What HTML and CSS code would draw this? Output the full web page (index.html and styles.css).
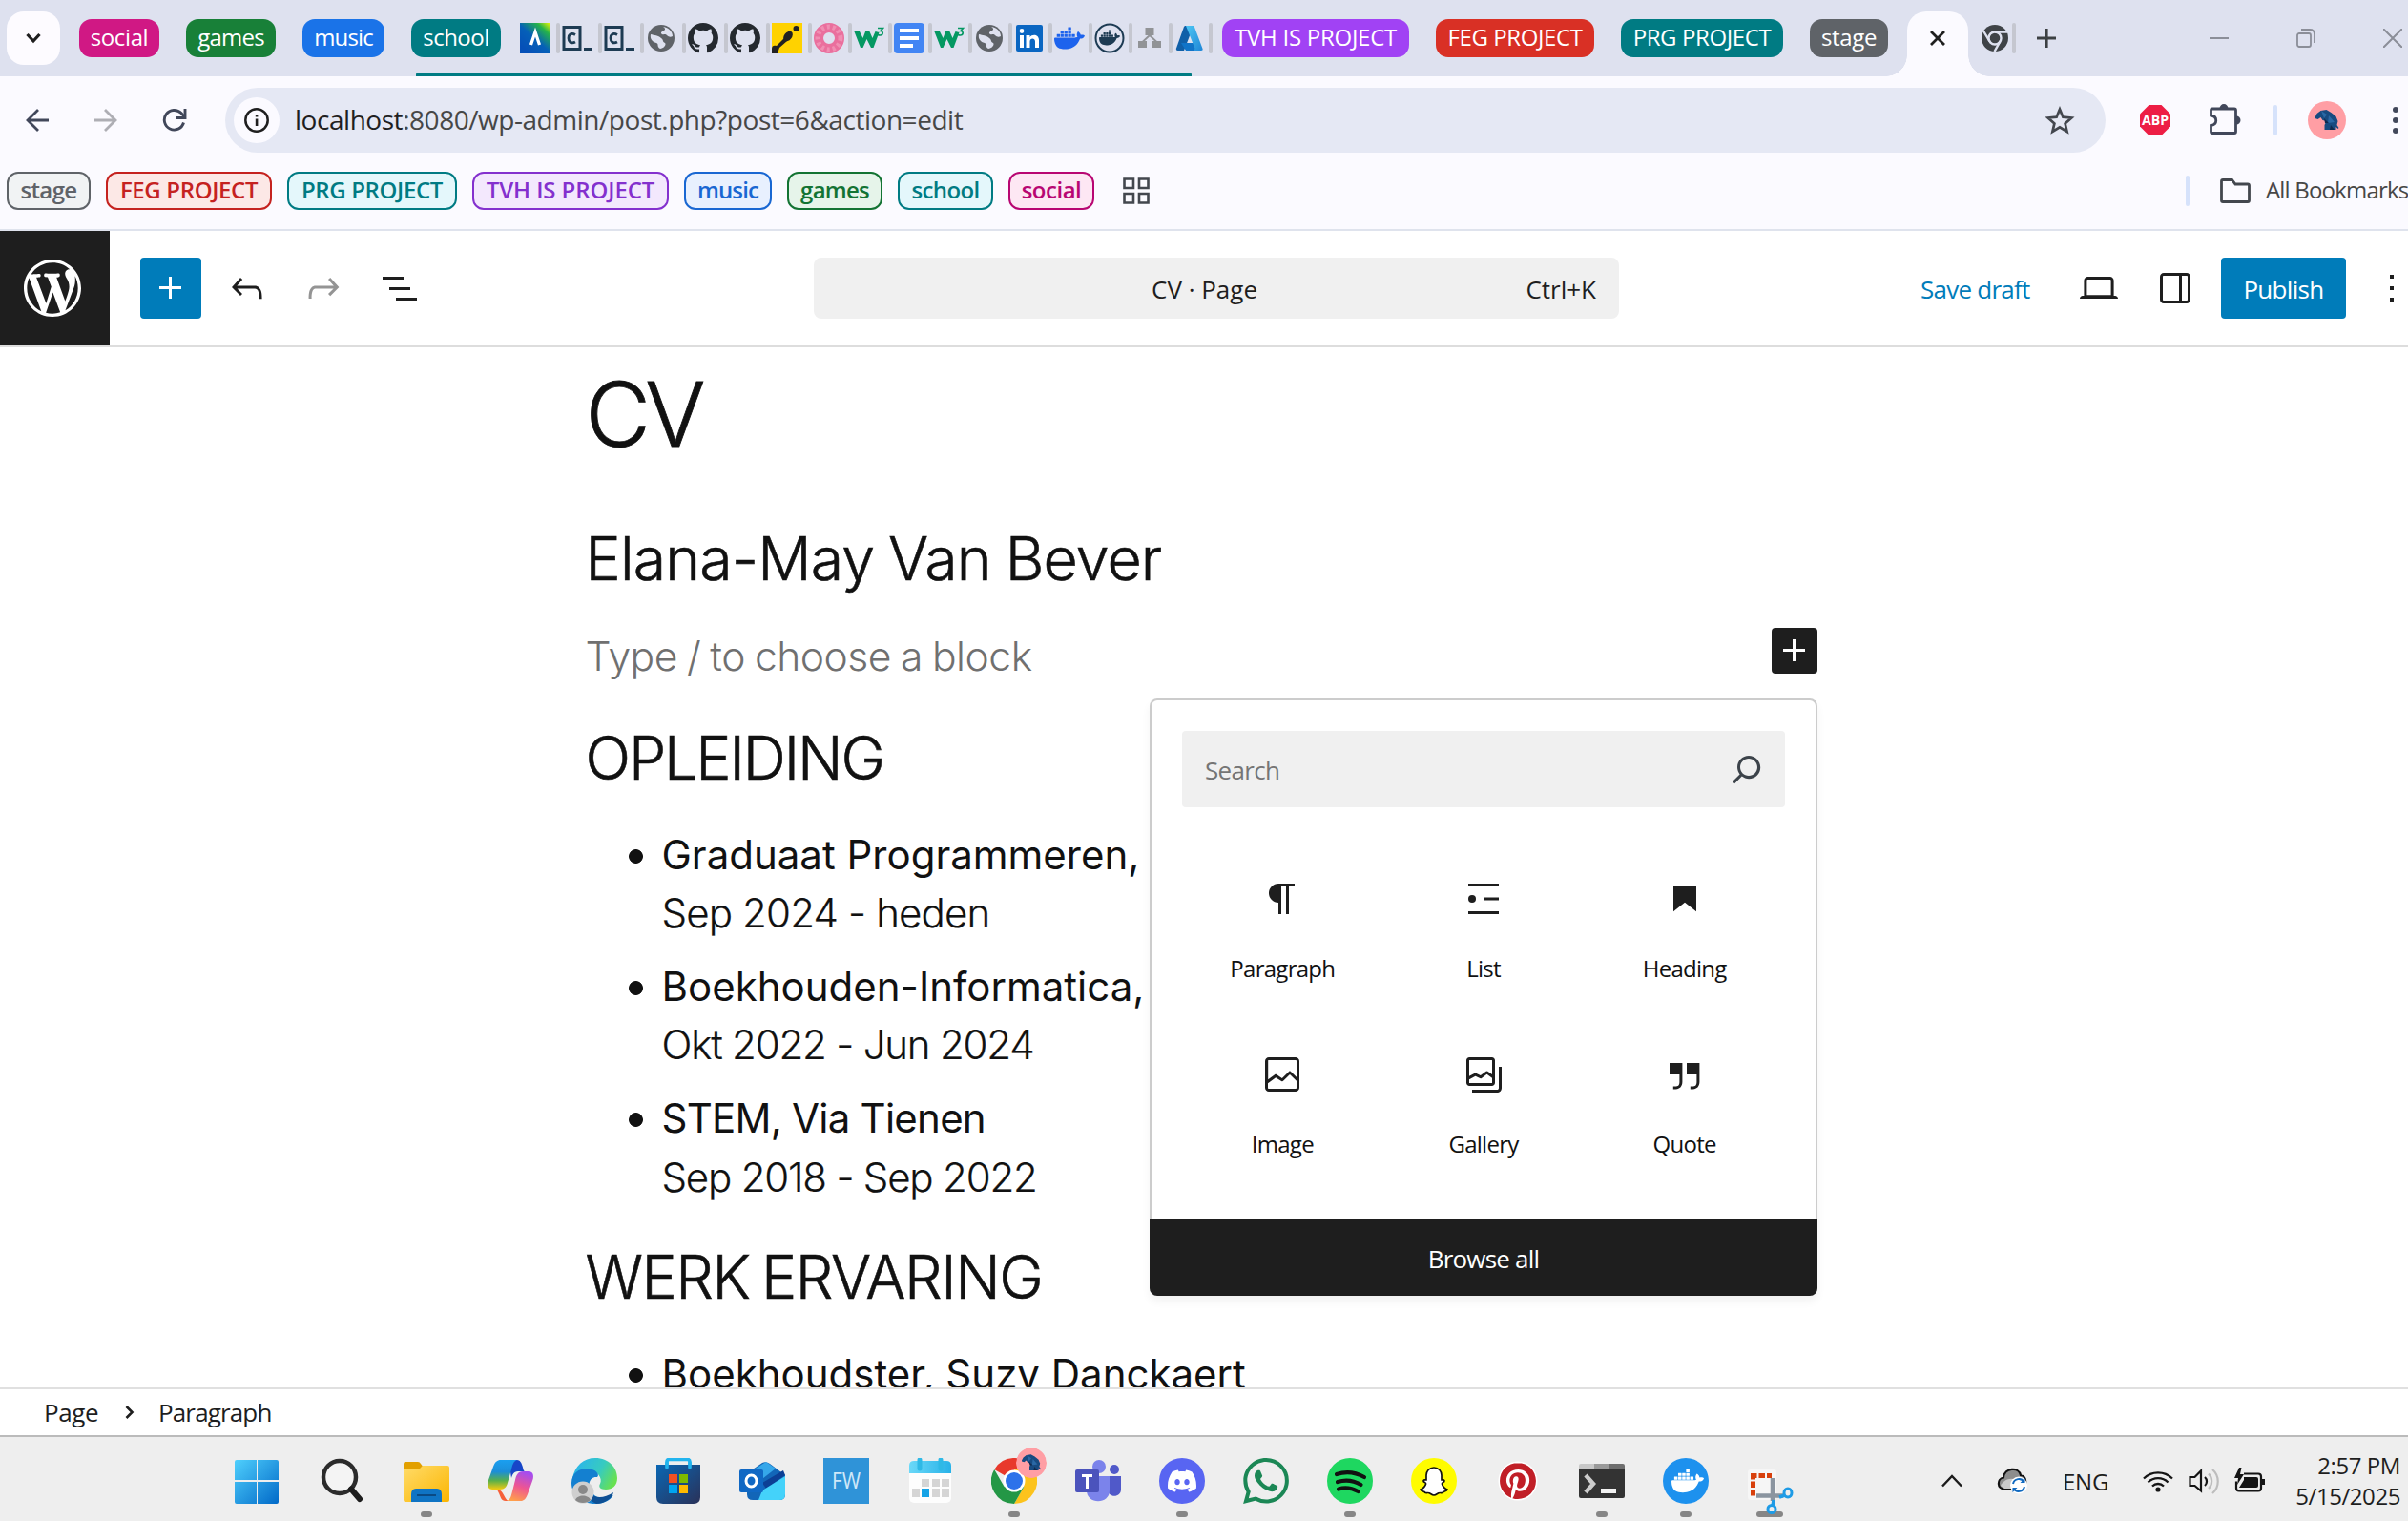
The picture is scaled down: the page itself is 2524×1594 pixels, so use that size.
FILE: index.html
```html
<!DOCTYPE html>
<html lang="nl">
<head>
<meta charset="utf-8">
<title>CV - Page editor</title>
<link rel="stylesheet" href="styles.css">
</head>
<body>
<svg class="defs" width="0" height="0" aria-hidden="true">
  <defs>
    <linearGradient id="g-win" x1="0" y1="0" x2="1" y2="1"><stop offset="0" stop-color="#4fd0fd"/><stop offset="1" stop-color="#0169c8"/></linearGradient>
    <linearGradient id="g-fold" x1="0" y1="0" x2="1" y2="1"><stop offset="0" stop-color="#ffdc6a"/><stop offset="1" stop-color="#fbb500"/></linearGradient>
    <linearGradient id="g-copA" x1="0" y1="0" x2="0" y2="1"><stop offset="0" stop-color="#1a9ff0"/><stop offset=".4" stop-color="#1c8ed8"/><stop offset=".7" stop-color="#58b04a"/><stop offset="1" stop-color="#f5cb10"/></linearGradient>
    <linearGradient id="g-copB" x1=".6" y1="0" x2=".3" y2="1"><stop offset="0" stop-color="#a44df0"/><stop offset=".5" stop-color="#ee5592"/><stop offset="1" stop-color="#ffa04a"/></linearGradient>
    <linearGradient id="g-edge" x1="0" y1=".2" x2="1" y2=".6"><stop offset="0" stop-color="#2ab3ef"/><stop offset=".6" stop-color="#37cbc0"/><stop offset="1" stop-color="#68e150"/></linearGradient>
    <linearGradient id="g-store" x1="0" y1="0" x2="1" y2="1"><stop offset="0" stop-color="#0a67b4"/><stop offset="1" stop-color="#2a3158"/></linearGradient>
    <linearGradient id="g-cal" x1="0" y1="0" x2="1" y2="0"><stop offset="0" stop-color="#6ad8f8"/><stop offset="1" stop-color="#28b2e8"/></linearGradient>
    <linearGradient id="g-ang" x1="1" y1="0" x2=".2" y2=".9"><stop offset="0" stop-color="#f2fa00"/><stop offset=".25" stop-color="#25b34a"/><stop offset=".6" stop-color="#0560b8"/><stop offset="1" stop-color="#0550b8"/></linearGradient>
    <linearGradient id="g-az" x1="0" y1="0" x2="1" y2="1"><stop offset="0" stop-color="#4cc6f4"/><stop offset="1" stop-color="#1f86d6"/></linearGradient>
    <symbol id="i-code" viewBox="0 0 32 32"><path d="M2 4.500h17v23H2z" fill="none" stroke="#1d3b53" stroke-width="3"/><path d="M23 26h9v3h-9z" fill="#1d3b53"/><path d="M14 12.500c-4.500-2.500-7 0-7 3.500s2.500 6.500 7 4" fill="none" stroke="#1d3b53" stroke-width="2.800"/></symbol>
    <symbol id="i-globe" viewBox="0 0 32 32"><circle cx="16" cy="16" r="14" fill="#5f6368"/><path d="M5 12c4 1 8 1 11 4 3 2 1 4 4 5 2 2-2 6-5 6-4-2-1-5-4-6-4-1-7-4-6-9zM18 4c2 1 3 3 1 4-3 1-4 3-2 4s3-1 5 1 4 2 6 1c0-5-4-9-10-10z" fill="#dee1ef"/></symbol>
    <symbol id="i-github" viewBox="0 0 16 16"><path fill="#24292f" d="M8 0C3.580 0 0 3.580 0 8c0 3.540 2.290 6.530 5.470 7.590.4.070.55-.17.55-.38 0-.19-.01-.82-.01-1.490-2.010.37-2.530-.49-2.690-.94-.09-.23-.48-.94-.82-1.130-.28-.15-.68-.52-.01-.53.63-.01 1.080.58 1.230.82.72 1.210 1.870.87 2.330.66.070-.52.28-.87.51-1.070-1.780-.2-3.640-.89-3.640-3.950 0-.87.31-1.590.82-2.150-.08-.2-.36-1.020.08-2.120 0 0 .67-.21 2.200.82.64-.18 1.320-.27 2-.27.68 0 1.360.09 2 .27 1.530-1.040 2.200-.82 2.200-.82.44 1.100.16 1.920.08 2.120.51.56.82 1.270.82 2.150 0 3.070-1.870 3.750-3.650 3.950.29.25.54.73.54 1.480 0 1.070-.01 1.930-.01 2.200 0 .21.15.46.55.38A8.013 8.013 0 0016 8c0-4.420-3.580-8-8-8z"/></symbol>
    <symbol id="i-w3" viewBox="0 0 32 32"><path d="M0 8h5.500l4 8 3-8h3.500l3.500 8 3-7 4 1-6 16h-2.500l-4.500-9-4 9H7z" fill="#059862"/><path d="M25 5.500h5.500l-2.500 3c3 0 3 4.500-.5 4.500-1.500 0-2.500-.5-2.500-1.500" fill="none" stroke="#059862" stroke-width="1.700"/></symbol>
    <symbol id="i-whale" viewBox="0 0 24 24"><path d="M13.983 11.078h2.119a.186.186 0 00.186-.185V9.006a.186.186 0 00-.186-.186h-2.119a.185.185 0 00-.185.185v1.888c0 .102.083.185.185.185m-2.954-5.430h2.118a.186.186 0 00.186-.186V3.574a.186.186 0 00-.186-.185h-2.118a.185.185 0 00-.185.185v1.888c0 .102.082.185.185.186m0 2.716h2.118a.187.187 0 00.186-.186V6.290a.186.186 0 00-.186-.185h-2.118a.185.185 0 00-.185.185v1.887c0 .102.082.185.185.186m-2.930 0h2.120a.186.186 0 00.184-.186V6.290a.185.185 0 00-.185-.185H8.100a.185.185 0 00-.185.185v1.887c0 .102.083.185.185.186m-2.964 0h2.119a.186.186 0 00.185-.186V6.290a.185.185 0 00-.185-.185H5.136a.186.186 0 00-.186.185v1.887c0 .102.084.185.186.186m5.893 2.715h2.118a.186.186 0 00.186-.185V9.006a.186.186 0 00-.186-.186h-2.118a.185.185 0 00-.185.185v1.888c0 .102.082.185.185.185m-2.930 0h2.120a.185.185 0 00.184-.185V9.006a.185.185 0 00-.184-.186h-2.120a.185.185 0 00-.184.185v1.888c0 .102.083.185.185.185m-2.964 0h2.119a.185.185 0 00.185-.185V9.006a.185.185 0 00-.184-.186h-2.120a.186.186 0 00-.186.186v1.887c0 .102.084.185.186.185m-2.920 0h2.120a.185.185 0 00.184-.185V9.006a.185.185 0 00-.184-.186h-2.120a.185.185 0 00-.184.185v1.888c0 .102.082.185.185.185M23.763 9.890c-.065-.051-.672-.51-1.954-.51-.338.001-.676.03-1.010.087-.248-1.700-1.653-2.530-1.716-2.566l-.344-.199-.226.327c-.284.438-.49.922-.612 1.430-.23.97-.09 1.882.403 2.661-.595.332-1.550.413-1.744.42H.751a.751.751 0 00-.75.748 11.376 11.376 0 00.692 4.062c.545 1.428 1.355 2.480 2.410 3.124 1.180.723 3.100 1.137 5.275 1.137.983.003 1.963-.086 2.930-.266a12.248 12.248 0 003.823-1.389c.98-.567 1.860-1.288 2.610-2.136 1.252-1.418 1.998-2.997 2.553-4.400h.221c1.372 0 2.215-.549 2.680-1.009.309-.293.55-.65.707-1.046l.098-.288Z"/></symbol>
    <symbol id="i-elephant" viewBox="0 0 40 40"><circle cx="20" cy="20" r="20" fill="#ff9ea4"/><path d="M7.500 17l2-4 4-3 6-1 5 3 5 4 2 5-1 4 2 3-1 1-2-2v3h-12v-5l2-4-4-1-2-3-3 2-3-1z" fill="#174a80"/><path d="M14 10l6 4-3 4zm8 5l6 7-7 1z" fill="#2a68a5"/><path d="M17 18l5 5-4 0zm7 7l4 5h-5z" fill="#10294d"/></symbol>
  </defs>
</svg>

<div class="screen">
  <header class="tabstrip">
    <button class="tab-search"><svg width="16" height="12" viewBox="0 0 16 12"><path d="M1.500 2l6.500 7 6.500-7" fill="none" stroke="#1f1f1f" stroke-width="3.200"/></svg></button>
    <span class="chip chip-social">social</span>
    <span class="chip chip-games">games</span>
    <span class="chip chip-music">music</span>
    <div class="school-group">
      <span class="chip chip-school">school</span>
      <div class="favs wide">
        <i><svg viewBox="0 0 32 32"><path d="M0 0h32v32H0z" fill="url(#g-ang)"/><path d="M11.500 23L16 9.500 20.500 23" fill="none" stroke="#fff" stroke-width="3.200"/></svg></i>
        <i><svg><use href="#i-code"/></svg></i>
        <i><svg><use href="#i-code"/></svg></i>
        <i><svg><use href="#i-globe"/></svg></i>
        <i><svg><use href="#i-github"/></svg></i>
        <i><svg><use href="#i-github"/></svg></i>
        <i><svg viewBox="0 0 32 32"><path d="M0 0h32v32H0z" fill="#ffd200"/><circle cx="25.500" cy="6" r="3" fill="#222"/><ellipse cx="17" cy="14" rx="4" ry="6" transform="rotate(38 17 14)" fill="#222"/><path d="M0 32v-5c0-3 2-4 5-3l8-8 3 3-8 7-2 6z" fill="#222"/></svg></i>
      </div>
      <div class="favs">
        <i><svg viewBox="0 0 32 32"><circle cx="16" cy="16" r="11" fill="none" stroke="#ea6f9d" stroke-width="10"/><circle cx="16" cy="16" r="12" fill="none" stroke="#f08fb3" stroke-width="5" stroke-dasharray="3 3"/></svg></i>
        <i><svg><use href="#i-w3"/></svg></i>
        <i><svg viewBox="0 0 32 32"><rect width="32" height="32" rx="4" fill="#4285f4"/><path d="M6 6h20v4H6zm0 8h20v4H6zm0 8h14v4H6z" fill="#fff"/></svg></i>
        <i><svg><use href="#i-w3"/></svg></i>
        <i><svg><use href="#i-globe"/></svg></i>
        <i><svg viewBox="0 0 32 32"><rect x="2" y="2" width="28" height="28" rx="2" fill="#0a66c2"/><path d="M6 13h4v13H6zM12.500 13h4v2c2-3.500 9.500-3.500 9.500 3V26h-4v-6.500c0-4-5.500-4-5.500 0V26h-4z" fill="#fff"/><circle cx="8" cy="8.500" r="2.400" fill="#fff"/></svg></i>
        <i><svg viewBox="0 0 24 24" fill="#1d63ed"><use href="#i-whale"/></svg></i>
        <i><svg viewBox="0 0 32 32" fill="#1d3b53"><circle cx="16" cy="16" r="14.500" fill="none" stroke="#1d3b53" stroke-width="2"/><svg x="5" y="4.500" width="22" height="22"><use href="#i-whale"/></svg></svg></i>
        <i><svg viewBox="0 0 32 32" fill="#919396"><path d="M11.500 5h9v8h-9zM4 19h9v7H4zm15 0h9v7h-9z"/><path d="M16 12v2M16 13l-7.500 7M16 13l7.500 7" stroke="#919396" stroke-width="1.800"/></svg></i>
        <i><svg viewBox="0 0 32 32"><path d="M11 3h9L10 29H3.500C2 29 1.500 28 2 26.500L10 4z" fill="#1160a8"/><path d="M7 21h13l4 8H12z" fill="#1174c8"/><path d="M12 3h8.500l9 24c.4 1 0 2-1.500 2h-8l1.500-2z" fill="url(#g-az)"/></svg></i>
      </div>
    </div>
    <span class="chip chip-tvh">TVH IS PROJECT</span>
    <span class="chip chip-feg">FEG PROJECT</span>
    <span class="chip chip-prg">PRG PROJECT</span>
    <span class="chip chip-stage">stage</span>
    <div class="tab-active"><svg width="16" height="16" viewBox="0 0 16 16"><path d="M1 1l14 14M15 1L1 15" stroke="#1f1f1f" stroke-width="2.800"/></svg></div>
    <div class="tab-chrome"><svg width="28" height="28" viewBox="0 0 28 28"><circle cx="14" cy="14" r="14" fill="#3f4347"/><circle cx="14" cy="14" r="6.500" fill="#3f4347" stroke="#dee1ef" stroke-width="2.400"/><path d="M14 7.500h13M8.400 17.200L2 6.500M19.600 17.200L13.500 28" stroke="#dee1ef" stroke-width="2.400"/></svg></div>
    <svg class="tab-new" width="20" height="20" viewBox="0 0 20 20"><path d="M10 0v20M0 10h20" stroke="#3c4043" stroke-width="3.200"/></svg>
    <div class="window-buttons">
      <svg width="20" height="20" viewBox="0 0 20 20"><path d="M0 10h20" stroke="#8b8e98" stroke-width="2"/></svg>
      <svg width="20" height="20" viewBox="0 0 20 20"><rect x="1" y="5" width="14" height="14" rx="2" fill="none" stroke="#8b8e98" stroke-width="1.800"/><path d="M5 1h9c3 0 5 2 5 5v9" fill="none" stroke="#8b8e98" stroke-width="1.800"/></svg>
      <svg width="20" height="20" viewBox="0 0 20 20"><path d="M0 0l20 20M20 0L0 20" stroke="#8b8e98" stroke-width="2"/></svg>
    </div>
  </header>

  <nav class="toolbar">
    <svg class="t-back" width="24" height="24" viewBox="0 0 24 24"><path d="M24 12H2M13 1L2 12l11 11" fill="none" stroke="#41475a" stroke-width="2.800"/></svg>
    <svg class="t-fwd" width="24" height="24" viewBox="0 0 24 24"><path d="M0 12h22M11 1l11 11-11 11" fill="none" stroke="#aeaeb4" stroke-width="2.800"/></svg>
    <svg class="t-reload" width="26" height="26" viewBox="0 0 26 26"><path d="M22.500 15.500A10.300 10.300 0 1 1 20 5.600L23 9" fill="none" stroke="#41475a" stroke-width="2.900"/><path d="M24 1v9.500h-9.500" fill="none" stroke="#41475a" stroke-width="2.900"/></svg>
    <div class="omnibox">
      <span class="site-info"><svg width="28" height="28" viewBox="0 0 28 28"><circle cx="14" cy="14" r="11.700" fill="none" stroke="#1f1f1f" stroke-width="2.500"/><path d="M12.800 12.500h2.600V20h-2.600zM12.800 8h2.600v2.600h-2.600z" fill="#1f1f1f"/></svg></span>
      <span class="url"><b>localhost</b>:8080/wp-admin/post.php?post=6&amp;action=edit</span>
      <svg class="star" width="32" height="30" viewBox="0 0 32 30"><path d="M16 3.500l3.400 8.200 8.900.8-6.700 5.900 2 8.600-7.600-4.600L8.400 27l2-8.600-6.700-5.900 8.900-.8z" fill="none" stroke="#43474e" stroke-width="2.700"/></svg>
    </div>
    <svg class="t-abp" width="32" height="32" viewBox="0 0 32 32"><path d="M9.500 0h13L32 9.500v13L22.500 32h-13L0 22.500v-13z" fill="#ed1e45"/><text x="16" y="21" text-anchor="middle" textLength="28" lengthAdjust="spacingAndGlyphs" class="abp-label">ABP</text></svg>
    <svg class="t-ext" width="34" height="34" viewBox="0 0 34 34"><path d="M3 6h23q1.500 0 1.500 1.500V30q0 1.500-1.500 1.500H3q-1.500 0-1.500-1.500v-6.500c7-1 7-9.500 0-10.500V7.500Q1.500 6 3 6z" fill="none" stroke="#41475a" stroke-width="2.800"/><path d="M10.500 6a4.500 5 0 0 1 9 0zM28 13.500a4.500 4.500 0 0 1 0 9z" fill="#41475a"/></svg>
    <span class="divider"></span>
    <svg class="t-avatar" width="40" height="40"><use href="#i-elephant"/></svg>
    <svg class="t-more" width="6" height="28" viewBox="0 0 6 28" fill="#41475a"><circle cx="3" cy="3" r="3"/><circle cx="3" cy="14" r="3"/><circle cx="3" cy="25" r="3"/></svg>
  </nav>

  <nav class="bookmarks">
    <span class="mark m-stage">stage</span>
    <span class="mark m-feg">FEG PROJECT</span>
    <span class="mark m-prg">PRG PROJECT</span>
    <span class="mark m-tvh">TVH IS PROJECT</span>
    <span class="mark m-music">music</span>
    <span class="mark m-games">games</span>
    <span class="mark m-school">school</span>
    <span class="mark m-social">social</span>
    <svg class="apps" width="28" height="28" viewBox="0 0 28 28" fill="none" stroke="#43474e" stroke-width="2.600"><path d="M1.500 1.500H11V11H1.500zM17 1.500h9.500V11H17zM1.500 17H11v9.500H1.500zM17 17h9.500v9.500H17z"/></svg>
    <span class="divider"></span>
    <svg class="folder" width="32" height="26" viewBox="0 0 32 26"><path d="M3 1.500h9.500L16 6h13q1.500 0 1.500 1.500V23q0 1.500-1.500 1.500H3q-1.500 0-1.500-1.500V3q0-1.500 1.500-1.500z" fill="none" stroke="#43474e" stroke-width="2.800"/></svg>
    <span class="all-bookmarks">All Bookmarks</span>
  </nav>

  <div class="editor-header">
    <a class="wp-logo"><svg width="60" height="60" viewBox="0 0 20 20" fill="#fff"><path d="M20 10c0-5.510-4.490-10-10-10C4.480 0 0 4.490 0 10c0 5.520 4.480 10 10 10 5.510 0 10-4.480 10-10zM7.780 15.370L4.370 6.220c.55-.02 1.170-.08 1.170-.08.5-.06.44-1.130-.06-1.110 0 0-1.450.11-2.370.11-.18 0-.37 0-.58-.01C4.120 2.690 6.870 1.110 10 1.110c2.330 0 4.450.87 6.050 2.340-.68-.11-1.650.39-1.650 1.580 0 .74.45 1.360.9 2.100.35.61.55 1.360.55 2.460 0 1.490-1.400 5-1.400 5l-3.030-8.370c.54-.02.82-.17.82-.17.5-.05.44-1.250-.06-1.220 0 0-1.440.12-2.380.12-.87 0-2.330-.12-2.330-.12-.5-.03-.56 1.200-.06 1.220l.92.08 1.260 3.410zM17.410 10c.24-.64.74-1.870.43-4.250.7 1.290 1.050 2.710 1.050 4.250 0 3.290-1.730 6.240-4.400 7.780.97-2.590 1.940-5.200 2.920-7.780zM6.100 18.090C3.120 16.650 1.110 13.530 1.110 10c0-1.300.23-2.480.72-3.590C3.250 10.300 4.670 14.200 6.100 18.090zm4.030-6.630l2.580 6.980c-.86.29-1.760.45-2.710.45-.79 0-1.570-.11-2.290-.33.81-2.380 1.620-4.740 2.420-7.100z"/></svg></a>
    <button class="inserter"><svg class="wpi" viewBox="0 0 24 24"><path d="M11 12.500V17.500H12.500V12.500H17.500V11H12.500V6H11V11H6V12.500H11Z"/></svg></button>
    <svg class="wpi h-undo" viewBox="0 0 24 24"><path d="M18.300 11.700c-.6-.6-1.400-.9-2.300-.9H6.700l2.900-3.300-1.100-1-4.500 5L8.500 16l1-1-2.700-2.700H16c.5 0 .9.2 1.300.5 1 1 1 3.400 1 4.500v.3h1.500v-.2c0-1.500 0-4.300-1.500-5.700z"/></svg>
    <svg class="wpi h-redo" viewBox="0 0 24 24"><path d="M15.600 6.500l-1.100 1 2.900 3.300H8c-.9 0-1.700.3-2.300.9-1.400 1.500-1.400 4.200-1.400 5.600v.2h1.500v-.3c0-1.100 0-3.500 1-4.500.3-.3.7-.5 1.300-.5h9.200L14.500 15l1.100 1.100 4.600-4.600-4.600-5z"/></svg>
    <svg class="wpi h-list" viewBox="0 0 24 24"><path d="M3 6h11v1.500H3V6Zm3.500 5.500h11V13h-11v-1.500ZM21 17H10v1.500h11V17Z"/></svg>
    <div class="command-bar"><span class="doc">CV · Page</span><span class="keys">Ctrl+K</span></div>
    <span class="save-draft">Save draft</span>
    <svg class="wpi h-view" viewBox="0 0 24 24"><path d="M20.500 16h-.7V8c0-1.100-.9-2-2-2H6.200c-1.100 0-2 .9-2 2v8h-.7c-.8 0-1.500.7-1.500 1.500h20c0-.8-.7-1.500-1.500-1.500zM5.700 8c0-.3.2-.5.5-.5h11.600c.3 0 .5.2.5.5v7.600H5.700V8z"/></svg>
    <svg class="wpi h-side" viewBox="0 0 24 24"><path d="M18 4H6c-1.100 0-2 .9-2 2v12c0 1.100.9 2 2 2h12c1.100 0 2-.9 2-2V6c0-1.100-.9-2-2-2zm-4 14.500H6c-.3 0-.5-.2-.5-.5V6c0-.3.2-.5.5-.5h8v13zm4.500-.5c0 .3-.2.5-.5.5h-2.500v-13H18c.3 0 .5.2.5.5v12z"/></svg>
    <button class="publish">Publish</button>
    <svg class="wpi h-more" viewBox="0 0 24 24"><path d="M13 19h-2v-2h2v2zm0-6h-2v-2h2v2zm0-6h-2V5h2v2z"/></svg>
  </div>

  <main class="canvas">
    <h1>CV</h1>
    <h2 class="s-name">Elana-May Van Bever</h2>
    <p class="placeholder">Type / to choose a block</p>
    <h2 class="s-edu">OPLEIDING</h2>
    <ul>
      <li><b>Graduaat Programmeren,</b><span class="d1">Sep 2024 - heden</span></li>
      <li><b>Boekhouden-Informatica,</b><span class="d2">Okt 2022 - Jun 2024</span></li>
      <li><b class="stem">STEM, Via Tienen</b><span class="d2">Sep 2018 - Sep 2022</span></li>
    </ul>
    <h2 class="s-work">WERK ERVARING</h2>
    <ul>
      <li><b>Boekhoudster, Suzy Danckaert</b></li>
    </ul>
    <button class="block-add"><svg class="wpi" viewBox="0 0 24 24"><path d="M11 12.500V17.500H12.500V12.500H17.500V11H12.500V6H11V11H6V12.500H11Z"/></svg></button>
    <div class="quick-inserter">
      <div class="search"><span>Search</span><svg class="wpi" viewBox="0 0 24 24"><path d="M13 5c-3.300 0-6 2.700-6 6 0 1.400.5 2.700 1.300 3.700l-3.800 3.800 1.100 1.100 3.800-3.800c1 .8 2.300 1.300 3.700 1.300 3.300 0 6-2.700 6-6S16.300 5 13 5zm0 10.500c-2.500 0-4.500-2-4.500-4.500s2-4.500 4.500-4.500 4.500 2 4.500 4.500-2 4.500-4.500 4.500z"/></svg></div>
      <div class="blocks">
        <div><svg class="wpi" viewBox="0 0 24 24"><path d="m9.996 14v-.225l.004 0v6.225h1.500v-14.500h2.500v14.500h1.500v-14.500h3v-1.500h-8.504c-2.761 0-5 2.239-5 5 0 2.761 2.239 5 5 5z"/></svg><span>Paragraph</span></div>
        <div><svg class="wpi" viewBox="0 0 24 24"><path d="M4 4h16v1.500H4zM12 11.200h8v1.500h-8zM4 18.500h16V20H4z"/><circle cx="6" cy="12" r="2"/></svg><span>List</span></div>
        <div><svg class="wpi" viewBox="0 0 24 24"><path d="M6 5V18.591L12 13.847L18 18.591V5H6Z"/></svg><span>Heading</span></div>
        <div><svg class="wpi" viewBox="0 0 24 24"><path d="M19 3H5c-1.100 0-2 .9-2 2v14c0 1.100.9 2 2 2h14c1.100 0 2-.9 2-2V5c0-1.100-.9-2-2-2zM5 4.500h14c.3 0 .5.2.5.5v8.400l-3-2.900c-.3-.3-.8-.3-1 0L11.900 14 9 12c-.3-.2-.6-.2-.8 0l-3.600 2.600V5c-.1-.3.1-.5.4-.5zm14 15H5c-.3 0-.5-.2-.5-.5v-2.400l4.100-3 3 1.900c.3.2.7.2.9-.1L16 12l3.500 3.400V19c0 .3-.2.5-.5.5z"/></svg><span>Image</span></div>
        <div><svg class="wpi" viewBox="0 0 24 24"><path fill-rule="evenodd" d="M16.375 4.500H4.625a.125.125 0 0 0-.125.125v8.254l2.859-1.540a.75.75 0 0 1 .68-.016l2.384 1.142 2.890-2.074a.75.75 0 0 1 .874 0l2.313 1.660V4.625a.125.125 0 0 0-.125-.125Zm.125 9.398-2.750-1.975-2.813 2.020a.75.75 0 0 1-.76.067l-2.444-1.170L4.500 14.583v1.792c0 .069.056.125.125.125h11.750a.125.125 0 0 0 .125-.125v-2.477ZM4.625 3C3.728 3 3 3.728 3 4.625v11.750C3 17.273 3.728 18 4.625 18h11.750c.898 0 1.625-.727 1.625-1.625V4.625C18 3.728 17.273 3 16.375 3H4.625ZM20 8v11c0 .69-.31 1-.999 1H6v1.500h13.001c1.520 0 2.499-.982 2.499-2.500V8H20Z"/></svg><span>Gallery</span></div>
        <div><svg class="wpi" viewBox="0 0 24 24"><path d="M13 6v6h5.200v4c0 .8-.2 1.400-.5 1.700-.6.6-1.600.6-2.500.5h-.3v1.500h.5c1 0 2.300-.1 3.300-1 .6-.6 1-1.600 1-2.800V6H13zm-9 6h5.200v4c0 .8-.2 1.400-.5 1.700-.6.6-1.600.6-2.500.5h-.3v1.500h.5c1 0 2.300-.1 3.300-1 .6-.6 1-1.600 1-2.800V6H4v6z"/></svg><span>Quote</span></div>
      </div>
      <button class="browse-all">Browse all</button>
    </div>
  </main>

  <div class="breadcrumb"><span class="bc-page">Page</span><svg width="10" height="14" viewBox="0 0 10 14"><path d="M1.500 1l6 6-6 6" fill="none" stroke="#1e1e1e" stroke-width="2.600"/></svg><span class="bc-par">Paragraph</span></div>

  <footer class="taskbar">
    <div class="apps-row">
      <i class="start"><svg viewBox="0 0 48 48"><path d="M3 2h21v21H1V4q0-2 2-2zM25 2h20q2 0 2 2v19H25zM1 25h23v23H3q-2 0-2-2zM25 25h22v21q0 2-2 2H25z" fill="url(#g-win)"/></svg></i>
      <i><svg viewBox="0 0 48 48"><circle cx="21" cy="20" r="17" fill="#f4f4f4" stroke="#2b2b2b" stroke-width="4.500"/><path d="M33 32.500L42 43" stroke="#1d1d1d" stroke-width="6" stroke-linecap="round"/></svg></i>
      <i class="run"><svg viewBox="0 0 48 48"><path d="M0 6q0-2 2-2h13q2 0 3 2l3 4v10H0z" fill="#e2a000"/><path d="M0 11h17l3-3h26q2 0 2 2v34q0 2-2 2H2q-2 0-2-2z" fill="url(#g-fold)"/><path d="M8 46V38q0-6 5-6h22q5 0 5 6v8z" fill="#0f74c4"/><path d="M14 38h20v2H14z" fill="#0a4a84"/></svg></i>
      <i><svg viewBox="0 0 48 48"><path d="M22 2h9c6 0 6 12 8 12h-7c-5 0-6 4-7 7z" fill="#1746c8"/><path d="M14 2h17c-4 1-5 6-6 10l-4 14c-1 4-3 7-8 7H5c-5 0-6-5-4-10L6 9c2-5 4-7 8-7z" fill="url(#g-copA)"/><path d="M10 33c7 0 7 10 12 12h-3c-5 0-5-4-7-8z" fill="#f6603a"/><path d="M35 45H20c4-1 5-6 6-10l3-12c1-5 3-9 8-9h6c5 0 6 5 4 10l-5 14c-2 5-4 7-7 7z" fill="url(#g-copB)"/></svg></i>
      <i><svg viewBox="0 0 48 48"><path d="M1 22C3 8 13 0 25 0c14 0 23 10 23 21 0 8-5 12-12 12-6 0-8-3-6-6 3-6-3-14-12-14C10 13 4 17 1 22z" fill="url(#g-edge)"/><path d="M0 26c0-10 8-15 16-15 10 0 14 7 11 9-9-1-11 10-5 17 5 6 14 6 22 2-4 6-11 9-19 9C10 48 0 38 0 26z" fill="#1480d0"/><path d="M17 28c0 12 12 18 27 8-1 6-9 12-18 12-8-3-12-12-9-20z" fill="#0d4f94"/><circle cx="12" cy="36" r="11.500" fill="#cfcfcf"/><circle cx="12" cy="33" r="5" fill="#888"/><path d="M4 44c2-6 14-6 16 0-4 4-12 4-16 0z" fill="#888"/></svg></i>
      <i><svg viewBox="0 0 48 48"><path d="M12 10V4q0-2.500 2.500-2.500h19Q36 1.500 36 4v6" fill="none" stroke="#22b4ee" stroke-width="3.600"/><path d="M1 7h46v34q0 7-7 7H8q-7 0-7-7z" fill="url(#g-store)"/><path d="M12 10V5M36 10V5" stroke="#22b4ee" stroke-width="3.600" stroke-linecap="round"/><path d="M14 17h9v9h-9z" fill="#f25022"/><path d="M25 17h9v9h-9z" fill="#7fba00"/><path d="M14 28h9v9h-9z" fill="#00a4ef"/><path d="M25 28h9v9h-9z" fill="#ffb900"/></svg></i>
      <i><svg viewBox="0 0 48 48"><path d="M8 16L24 5q4-2 8 1l16 12v20q0 6-6 6H14q-6 0-6-6z" fill="#1266b8"/><path d="M12 14L28 4l10 7-18 14z" fill="#35a7ea"/><path d="M24 26l22-13 2 5-20 14z" fill="#0c3f95"/><path d="M20 44l4-10 24-15v19q0 6-6 6z" fill="#44d2fa"/><rect y="12" width="25" height="24" rx="2" fill="#1068c4"/><ellipse cx="12.500" cy="24" rx="5.500" ry="6" fill="none" stroke="#fff" stroke-width="3"/></svg></i>
      <i><svg viewBox="0 0 48 48"><path d="M0 0h48v48H0z" fill="#2f93d8"/><text x="24" y="31.500" text-anchor="middle" textLength="30" lengthAdjust="spacingAndGlyphs" class="fw-label">FW</text></svg></i>
      <i><svg viewBox="0 0 48 48"><rect x="2" y="3" width="44" height="44" rx="5" fill="#fdfdfd"/><path d="M2 16V8q0-5 5-5h34q5 0 5 5v8z" fill="url(#g-cal)"/><path d="M13 2v9M35 2v9" stroke="#2fb9e6" stroke-width="5" stroke-linecap="round"/><path d="M15 22h8v8h-8zm11 0h8v8h-8zm10 0h8v8h-8zM5 32h8v9H5zm21 0h8v9h-8zm10 0h8v9h-8z" fill="#d5d5d5"/><path d="M15 32h8v9h-8z" fill="#16a3e6"/></svg></i>
      <i class="run"><svg viewBox="0 0 48 48"><path d="M24 24L3.200 12A24 24 0 0 1 44.800 12z" fill="#e8382c"/><path d="M24 24h0L34.400 30 24 48A24 24 0 0 0 44.800 12H24z" fill="#fcc31c"/><path d="M3.200 12L13.600 30 24 36v12A24 24 0 0 1 3.200 12z" fill="#249746"/><path d="M24 48l10.400-18L24 24 13.600 30z" fill="#249746"/><circle cx="24" cy="24" r="11.500" fill="#fff"/><circle cx="24" cy="24" r="9" fill="#2d72ea"/></svg><svg class="badge" width="32" height="32"><use href="#i-elephant"/></svg></i>
      <i><svg viewBox="0 0 48 48"><circle cx="25" cy="9" r="7" fill="#7b83eb"/><circle cx="41" cy="12" r="5" fill="#5059c9"/><path d="M34 19h14v14c0 9-14 9-14 0z" fill="#5059c9"/><path d="M12 19h24v15c0 15-24 15-24 0z" fill="#7b83eb"/><rect y="12" width="25" height="24" rx="2" fill="#4b53bc"/><path d="M7 17h11v3h-4v12h-3V20H7z" fill="#fff"/></svg></i>
      <i class="run"><svg viewBox="0 0 48 48"><circle cx="24" cy="24" r="24" fill="#5865f2"/><svg x="9" y="9" width="30" height="30" viewBox="0 0 24 24"><path fill="#fff" d="M20.317 4.370a19.791 19.791 0 00-4.885-1.515.074.074 0 00-.079.037c-.211.375-.445.865-.608 1.250-1.845-.276-3.680-.276-5.487 0-.164-.393-.406-.874-.618-1.250a.077.077 0 00-.079-.037 19.736 19.736 0 00-4.885 1.515.070.070 0 00-.032.028C.533 9.046-.319 13.580.099 18.058a.082.082 0 00.031.056c2.053 1.508 4.041 2.423 5.993 3.029a.078.078 0 00.084-.028c.462-.630.873-1.295 1.226-1.994a.076.076 0 00-.042-.106c-.653-.248-1.274-.550-1.872-.892a.077.077 0 01-.008-.128c.126-.094.252-.192.372-.291a.074.074 0 01.078-.010c3.928 1.793 8.180 1.793 12.061 0a.074.074 0 01.079.010c.120.099.246.198.373.292a.077.077 0 01-.007.128 12.299 12.299 0 01-1.873.891.077.077 0 00-.041.107c.360.698.772 1.363 1.225 1.993a.076.076 0 00.084.029c1.961-.607 3.950-1.522 6.002-3.029a.077.077 0 00.031-.055c.500-5.177-.838-9.674-3.549-13.660a.061.061 0 00-.031-.029zM8.020 15.331c-1.183 0-2.157-1.086-2.157-2.419 0-1.333.956-2.419 2.157-2.419 1.211 0 2.176 1.095 2.157 2.419 0 1.333-.956 2.419-2.157 2.419zm7.975 0c-1.183 0-2.157-1.086-2.157-2.419 0-1.333.955-2.419 2.157-2.419 1.211 0 2.176 1.095 2.157 2.419 0 1.333-.946 2.419-2.157 2.419Z"/></svg></svg></i>
      <i><svg viewBox="0 0 24 24"><path fill="#1b8755" d="M17.472 14.382c-.297-.149-1.758-.867-2.030-.967-.273-.099-.471-.148-.67.15-.197.297-.767.966-.94 1.164-.173.199-.347.223-.644.075-.297-.15-1.255-.463-2.390-1.475-.883-.788-1.480-1.761-1.653-2.059-.173-.297-.018-.458.13-.606.134-.133.298-.347.446-.52.149-.174.198-.298.298-.497.099-.198.05-.371-.025-.52-.075-.149-.669-1.612-.916-2.207-.242-.579-.487-.5-.669-.51-.173-.008-.371-.01-.57-.01-.198 0-.52.074-.792.372-.272.297-1.040 1.016-1.040 2.479 0 1.462 1.065 2.875 1.213 3.074.149.198 2.096 3.200 5.077 4.487.709.306 1.262.489 1.694.625.712.227 1.360.195 1.871.118.571-.085 1.758-.719 2.006-1.413.248-.694.248-1.289.173-1.413-.074-.124-.272-.198-.57-.347m-5.421 7.403h-.004a9.870 9.870 0 01-5.031-1.378l-.361-.214-3.741.982.998-3.648-.235-.374a9.860 9.860 0 01-1.510-5.260c.001-5.450 4.436-9.884 9.888-9.884 2.640 0 5.122 1.030 6.988 2.898a9.825 9.825 0 012.893 6.994c-.003 5.450-4.437 9.884-9.885 9.884m8.413-18.297A11.815 11.815 0 0012.050 0C5.495 0 .16 5.335.157 11.892c0 2.096.547 4.142 1.588 5.945L.057 24l6.305-1.654a11.882 11.882 0 005.683 1.448h.005c6.554 0 11.890-5.335 11.893-11.893a11.821 11.821 0 00-3.480-8.413z"/></svg></i>
      <i class="run"><svg viewBox="0 0 48 48"><circle cx="24" cy="24" r="24" fill="#1ed760"/><path d="M10 17c9-3 20-2 29 3M11 25c8-2.500 17-1.500 24.500 3M12 32.500c7-2 14-1 20.500 2.500" fill="none" stroke="#111" stroke-width="4.200" stroke-linecap="round"/></svg></i>
      <i><svg viewBox="0 0 48 48"><circle cx="24" cy="24" r="24" fill="#fffc00"/><path d="M24 10c5 0 8 4 8 8v5c1 0 2.500-.5 3 .8.300 1.700-3 1.800-2.600 3.200 1 3.500 3 5 5.600 6-.5 2-3 1.800-4 2.500-.5 2-3 .5-5 1.200-1.500.7-3 2.300-5 2.300s-3.500-1.600-5-2.300c-2-.7-4.500.8-5-1.200-1-.7-3.500-.5-4-2.500 2.600-1 4.600-2.500 5.600-6 .4-1.400-2.900-1.500-2.600-3.200.5-1.300 2-.8 3-.8v-5c0-4 3-8 8-8z" fill="#fff" stroke="#111" stroke-width="1.700"/></svg></i>
      <i><svg viewBox="0 0 48 48"><circle cx="24" cy="24" r="20.500" fill="#fff"/><svg x="5" y="5" width="38" height="38" viewBox="0 0 24 24"><path fill="#c11f27" d="M12.017 0C5.396 0 .029 5.367.029 11.987c0 5.079 3.158 9.417 7.618 11.162-.105-.949-.199-2.403.041-3.439.219-.937 1.406-5.957 1.406-5.957s-.359-.72-.359-1.781c0-1.663.967-2.911 2.168-2.911 1.024 0 1.518.769 1.518 1.688 0 1.029-.653 2.567-.992 3.992-.285 1.193.6 2.165 1.775 2.165 2.128 0 3.768-2.245 3.768-5.487 0-2.861-2.063-4.869-5.008-4.869-3.410 0-5.409 2.562-5.409 5.199 0 1.033.394 2.143.889 2.741.099.12.112.225.085.345-.09.375-.293 1.199-.334 1.363-.053.225-.172.271-.401.165-1.495-.69-2.433-2.878-2.433-4.646 0-3.776 2.748-7.252 7.920-7.252 4.158 0 7.392 2.967 7.392 6.923 0 4.135-2.607 7.462-6.233 7.462-1.214 0-2.354-.629-2.758-1.379l-.749 2.848c-.269 1.045-1.004 2.352-1.498 3.146 1.123.345 2.306.535 3.550.535 6.607 0 11.985-5.365 11.985-11.987C23.970 5.390 18.592.026 11.985.026z"/></svg></svg></i>
      <i class="run"><svg viewBox="0 0 48 48"><path d="M0 8q0-2 2-2h14v6H0z" fill="#c8c8c8"/><path d="M16 6h16v6H16z" fill="#9a9a9a"/><path d="M32 6h14q2 0 2 2v4H32z" fill="#6e6e6e"/><path d="M0 12h48v28q0 2-2 2H2q-2 0-2-2z" fill="#333"/><path d="M7 18l8 9-8 9" fill="none" stroke="#ccc" stroke-width="4.500"/><path d="M23 32h16v5H23z" fill="#f2f2f2"/></svg></i>
      <i class="run"><svg viewBox="0 0 48 48"><circle cx="24" cy="24" r="24" fill="#1d91ee"/><svg x="8" y="7" width="36" height="34" viewBox="0 0 24 24" fill="#fff"><use href="#i-whale"/></svg></svg></i>
      <i class="run on"><svg viewBox="0 0 48 48" overflow="visible"><rect x="1" y="12" width="30" height="32" rx="3" fill="#f6f6f6"/><path d="M6.500 16v24M4 18.500h22" fill="none" stroke="#d8400c" stroke-width="5" stroke-dasharray="6.500 2"/><path d="M27 21v24M10 39.500h28" fill="none" stroke="#8b95a0" stroke-width="4.500"/><ellipse cx="43" cy="36.500" rx="4" ry="4.500" fill="none" stroke="#1e9be6" stroke-width="3"/><path d="M34 41l6-2M28 44l-1 6" stroke="#1e9be6" stroke-width="3.500"/><ellipse cx="26" cy="53.500" rx="4" ry="4" fill="none" stroke="#1e9be6" stroke-width="3"/></svg></i>
    </div>
    <div class="tray">
      <svg width="22" height="14" viewBox="0 0 22 14"><path d="M1 12.500L11 2l10 10.500" fill="none" stroke="#1b1b1b" stroke-width="2.400"/></svg>
      <svg class="y-cloud" width="34" height="28" viewBox="0 0 34 28"><path d="M8 22.500c-8 0-8-11-1-12C8 0 23-1 25 8c7 1 7 13 0 14.500z" fill="#8d8d8d" stroke="#111" stroke-width="2.200"/><path d="M4 19c3-6 10-9 16-6l-4 9H8z" fill="#c9c9c9"/><circle cx="23" cy="18.500" r="9" fill="#fff"/><path d="M17 17a6.300 6.300 0 0 1 11.500-2M29 20a6.300 6.300 0 0 1-11.500 2" fill="none" stroke="#1069c0" stroke-width="2"/><path d="M29.500 11v5h-5zM16.500 26v-5h5z" fill="#1069c0"/></svg>
      <span class="y-lang">ENG</span>
      <svg class="y-wifi" width="32" height="24" viewBox="0 0 32 24" fill="none" stroke="#151515" stroke-width="2.300"><path d="M1 9.500a21.500 21.500 0 0 1 30 0M5.500 13.500a15 15 0 0 1 21 0M10 17.500a8.500 8.500 0 0 1 12 0"/><circle cx="16" cy="21" r="2.600" fill="#151515" stroke="none"/></svg>
      <svg class="y-vol" width="33" height="28" viewBox="0 0 33 28" fill="none" stroke="#151515" stroke-width="2.200"><path d="M1.500 10h5L13 3.500v21L6.500 19h-5z"/><path d="M17 10a6 6 0 0 1 0 9"/><path d="M21 6.500a11 11 0 0 1 0 15.500M25 2a16.500 16.500 0 0 1 0 25" stroke="#bdbdbd"/></svg>
      <svg class="y-bat" width="33" height="28" viewBox="0 0 33 28"><path d="M10 6.500h15q3 0 3 3v12q0 3-3 3H5q-3 0-3-3v-7" fill="none" stroke="#151515" stroke-width="2.200"/><path d="M10 10h13q2 0 2 2v7q0 2-2 2H5l5-8zM29 12h3v6h-3zM5 0L0 11h4l-1 7 7-11H6l1.500-7z" fill="#151515"/></svg>
      <div class="clock"><span>2:57 PM</span><span>5/15/2025</span></div>
    </div>
  </footer>
</div>
</body>
</html>
```
FILE: styles.css
```css
* { box-sizing: border-box; }
body { margin: 0; overflow: hidden; background: #fff; font-family: "Open Sans", "Noto Sans", sans-serif; color: #1e1e1e; }
svg { display: block; flex: none; }
.defs { position: absolute; }
button { border: 0; padding: 0; margin: 0; background: none; font: inherit; }
.screen { width: 2524px; height: 1594px; display: flex; flex-direction: column; overflow: hidden; background: #fff; }
.divider { width: 4px; height: 32px; border-radius: 2px; background: #d6e2fb; flex: none; }

/* Tab strip */
.tabstrip { height: 80px; flex: none; display: flex; align-items: center; padding-left: 7px; background: #dee1ef; }
.tab-search { width: 56px; height: 56px; border-radius: 18px; background: #fdfbff; display: flex; align-items: center; justify-content: center; margin-right: 20px; }
.chip { height: 40px; line-height: 37px; border-radius: 13px; color: #fff; font-size: 24px; text-align: center; margin-right: 28px; flex: none; white-space: nowrap; }
.chip-social { width: 84px; background: #d01884; letter-spacing: -.015em; }
.chip-games { width: 94px; background: #188038; letter-spacing: -.032em; }
.chip-music { width: 86px; background: #1a73e8; letter-spacing: -.036em; }
.chip-school { width: 94px; background: #007b83; letter-spacing: -.021em; margin-right: 20px; }
.chip-tvh { width: 196px; background: #a142f4; letter-spacing: -.011em; }
.chip-feg { width: 166px; background: #d93025; letter-spacing: -.017em; }
.chip-prg { width: 170px; background: #007b83; letter-spacing: -.016em; }
.chip-stage { width: 82px; background: #5f6368; letter-spacing: -.014em; margin-right: 20px; }
.school-group { position: relative; height: 80px; display: flex; align-items: center; margin-right: 8px; }
.school-group::after { content: ""; position: absolute; left: 5px; right: 24px; bottom: 0; height: 4px; border-radius: 2px 2px 0 0; background: #007b83; }
.favs { display: flex; }
.favs i { width: 42px; height: 32px; display: flex; }
.favs svg { width: 32px; height: 32px; }
.favs i::after { content: ""; width: 4px; margin-left: 4px; border-radius: 2px; background: #c5c7d0; }
.favs.wide i { width: 44px; }
.favs.wide i::after { margin-left: 6px; }
.favs svg svg { width: 22px; height: 22px; }
.tab-active { position: relative; width: 64px; height: 68px; align-self: flex-end; border-radius: 20px 20px 0 0; background: #fbfaff; display: flex; align-items: center; justify-content: center; padding-bottom: 12px; }
.tab-active::before, .tab-active::after { content: ""; position: absolute; bottom: 0; width: 22px; height: 22px; }
.tab-active::before { right: 100%; background: radial-gradient(circle at 0 0, transparent 21.500px, #fbfaff 22px); }
.tab-active::after { left: 100%; background: radial-gradient(circle at 100% 0, transparent 21.500px, #fbfaff 22px); }
.tab-chrome { width: 36px; height: 32px; margin-left: 14px; display: flex; align-items: center; justify-content: space-between; }
.tab-chrome::after { content: ""; width: 4px; height: 32px; border-radius: 2px; background: #c5c7d0; }
.tab-new { margin-left: 22px; }
.window-buttons { display: flex; gap: 71px; margin-left: 161px; }

/* Address bar */
.toolbar { height: 80px; flex: none; display: flex; align-items: center; padding: 12px 0 0 27px; background: #fbfaff; }
.t-fwd { margin-left: 48px; }
.t-reload { margin-left: 47px; }
.omnibox { width: 1971px; height: 68px; margin-left: 40px; padding-left: 9px; border-radius: 34px; background: #e5e8f4; display: flex; align-items: center; flex: none; }
.site-info { width: 48px; height: 48px; border-radius: 50%; background: #fbfaff; display: flex; align-items: center; justify-content: center; }
.url { margin-left: 16px; width: 1834px; font-size: 28px; line-height: 64px; height: 66px; letter-spacing: -.0165em; color: #474747; white-space: nowrap; }
.url b { font-weight: 400; color: #1f1f1f; }
.star { margin-left: 0; }
.t-abp { margin-left: 36px; }
.abp-label { font: 700 15px "Open Sans", sans-serif; fill: #fff; }
.t-ext { margin: -2px 0 0 41px; }
.toolbar .divider { margin-left: 33px; }
.t-avatar { margin-left: 32px; }
.t-more { margin-left: 49px; }

/* Bookmarks */
.bookmarks { height: 82px; flex: none; display: flex; align-items: center; padding-left: 7px; background: #fbfaff; border-bottom: 2px solid #dfe3ed; }
.mark { height: 40px; line-height: 33px; border: 2px solid; border-radius: 12px; font-size: 24px; font-weight: 600; text-align: center; margin-right: 16px; flex: none; white-space: nowrap; letter-spacing: -.015em; }
.m-stage { width: 88px; color: #5f6368; background: #f1f3f4; letter-spacing: -.025em; }
.m-feg { width: 174px; color: #c5221f; background: #fce8e6; }
.m-prg { width: 178px; color: #007b83; background: #e4f7fb; }
.m-tvh { width: 206px; color: #8430ce; background: #f3e8fd; letter-spacing: -.004em; }
.m-music { width: 92px; color: #1967d2; background: #e8f0fe; letter-spacing: -.036em; }
.m-games { width: 100px; color: #137333; background: #e6f4ea; letter-spacing: -.032em; }
.m-school { width: 100px; color: #007b83; background: #e4f7fb; letter-spacing: -.025em; }
.m-social { width: 90px; color: #b80672; background: #fde7f3; letter-spacing: -.02em; margin-right: 0; }
.apps { margin-left: 30px; }
.bookmarks .divider { margin-left: 1086px; }
.folder { margin-left: 32px; }
.all-bookmarks { margin-left: 16px; font-size: 24px; line-height: 37px; height: 40px; letter-spacing: -.034em; color: #474747; white-space: nowrap; }

/* Editor header */
.wpi { width: 48px; height: 48px; fill: #1e1e1e; }
.editor-header { height: 122px; flex: none; display: flex; align-items: center; border-bottom: 2px solid #ddd; background: #fff; font-size: 26px; }
.wp-logo { width: 115px; height: 120px; background: #1e1e1e; display: flex; align-items: center; padding-left: 25px; flex: none; }
.inserter { width: 64px; height: 64px; margin-left: 32px; border-radius: 4px; background: #007cba; display: flex; align-items: center; justify-content: center; flex: none; }
.inserter .wpi, .block-add .wpi { fill: #fff; }
.h-undo { margin-left: 24px; }
.h-redo { margin-left: 32px; fill: #949494; }
.h-list { margin-left: 32px; }
.command-bar { width: 844px; height: 64px; margin-left: 410px; border-radius: 8px; background: #f0f0f0; display: flex; align-items: center; padding: 1px 0 0 354px; flex: none; white-space: nowrap; }
.keys { margin-left: auto; padding-right: 24px; }
.save-draft { margin-left: 316px; width: 116px; padding-top: 2px; color: #007cba; letter-spacing: -.029em; white-space: nowrap; flex: none; }
.h-view { margin-left: 47px; }
.h-side { margin-left: 32px; }
.publish { width: 131px; height: 64px; margin-left: 24px; padding-top: 2px; border-radius: 4px; background: #007cba; color: #fff; letter-spacing: -.026em; flex: none; }
.h-more { margin-left: 24px; }

/* Page content */
.canvas { position: relative; height: 1090px; flex: none; overflow: hidden; padding: 16px 0 0 613.500px; font-family: Inter, sans-serif; color: #111; white-space: nowrap; }
h1, h2, p, ul { margin: 0; padding: 0; }
h1 { font-weight: 300; font-size: 94px; line-height: 108px; letter-spacing: -.06em; -webkit-text-stroke: .8px #111; }
h2 { font-weight: 300; font-size: 62.600px; line-height: 72px; -webkit-text-stroke: .6px #111; }
.s-name { margin-top: 60.500px; letter-spacing: -.0135em; word-spacing: -.03em; }
.placeholder { margin-top: 36.500px; font-weight: 300; font-size: 42.600px; line-height: 61px; letter-spacing: -.0115em; word-spacing: -.035em; color: #707070; }
.s-edu { margin-top: 40px; letter-spacing: -.0336em; }
.s-work { margin-top: 38px; letter-spacing: -.0235em; word-spacing: -.06em; }
ul { margin-top: 34.500px; list-style: none; display: flex; flex-direction: column; gap: 15.300px; }
li { display: flex; flex-direction: column; font-size: 42px; line-height: 61.500px; padding-left: 80px; background: radial-gradient(circle at 52.500px 32.500px, #111 7px, transparent 7.800px); }
li b { font-weight: 400; }
li span { font-weight: 300; -webkit-text-stroke: .2px #111; }
li .stem { letter-spacing: -.0181em; }
.d1 { letter-spacing: -.02em; }
.d2 { letter-spacing: -.0285em; }

/* Block inserter popover */
.block-add { position: absolute; left: 1857px; top: 294px; width: 48px; height: 48px; border-radius: 4px; background: #1e1e1e; }
.quick-inserter { position: absolute; left: 1205px; top: 368px; width: 700px; height: 626px; border: 2px solid #ccc; border-bottom: 0; border-radius: 8px; background: #fff; padding-top: 32px; box-shadow: 0 6px 10px rgba(0,0,0,.05); display: flex; flex-direction: column; font-family: "Open Sans", "Noto Sans", sans-serif; }
.search { height: 80px; flex: none; margin: 0 32px; padding: 0 16px 0 24px; border-radius: 4px; background: #f0f0f0; display: flex; align-items: center; justify-content: space-between; font-size: 26px; letter-spacing: -.026em; color: #757575; }
.search span { padding-top: 2px; }
.search .wpi { fill: #3c434a; }
.blocks { margin: 48px 32px 0; display: grid; grid-template-columns: repeat(3, 1fr); grid-auto-rows: 184px; font-size: 24px; letter-spacing: -.03em; }
.blocks div { display: flex; flex-direction: column; align-items: center; padding-top: 24px; }
.blocks span { margin-top: 33px; line-height: 32px; }
.browse-all { margin: auto -2px 0; height: 80px; flex: none; border-radius: 0 0 8px 8px; background: #1e1e1e; color: #fff; font-size: 26px; letter-spacing: -.03em; padding-top: 1px; }

/* Breadcrumb */
.breadcrumb { height: 52px; flex: none; border-top: 2px solid #e0e0e0; border-bottom: 2px solid #bbb; background: #fff; display: flex; align-items: center; padding-left: 46px; font-size: 26px; }
.bc-page { width: 85px; letter-spacing: -.015em; }
.bc-par { margin-left: 25px; letter-spacing: -.033em; }

/* Taskbar */
.taskbar { flex: 1; display: flex; background: #eee; }
.apps-row { display: flex; padding-left: 227px; }
.apps-row i { position: relative; width: 88px; height: 88px; padding: 22px 0 0 20px; flex: none; }
.apps-row .start { padding-left: 18px; }
.apps-row i > svg:first-child { width: 48px; height: 48px; }
.apps-row .badge { position: absolute; left: 46px; top: 11px; border-radius: 50%; }
.run::after { content: ""; position: absolute; left: 38px; bottom: 4px; width: 12px; height: 6px; border-radius: 3px; background: #868686; }
.run.on::after { left: 30px; width: 28px; z-index: -1; }
.run.on { z-index: 0; }
.fw-label { font: 400 23px "Open Sans", sans-serif; fill: #cfe8f8; }
.tray { display: flex; align-items: center; height: 92px; margin-left: 136px; font-size: 24px; flex: none; }
.y-cloud { margin-left: 36px; }
.y-lang { width: 48px; margin-left: 35px; letter-spacing: -.01em; }
.y-wifi { margin-left: 36px; }
.y-vol { margin-left: 16px; }
.y-bat { margin-left: 15px; }
.clock { width: 141px; display: flex; flex-direction: column; align-items: flex-end; line-height: 32px; letter-spacing: -.018em; padding-bottom: 1px; }
```
